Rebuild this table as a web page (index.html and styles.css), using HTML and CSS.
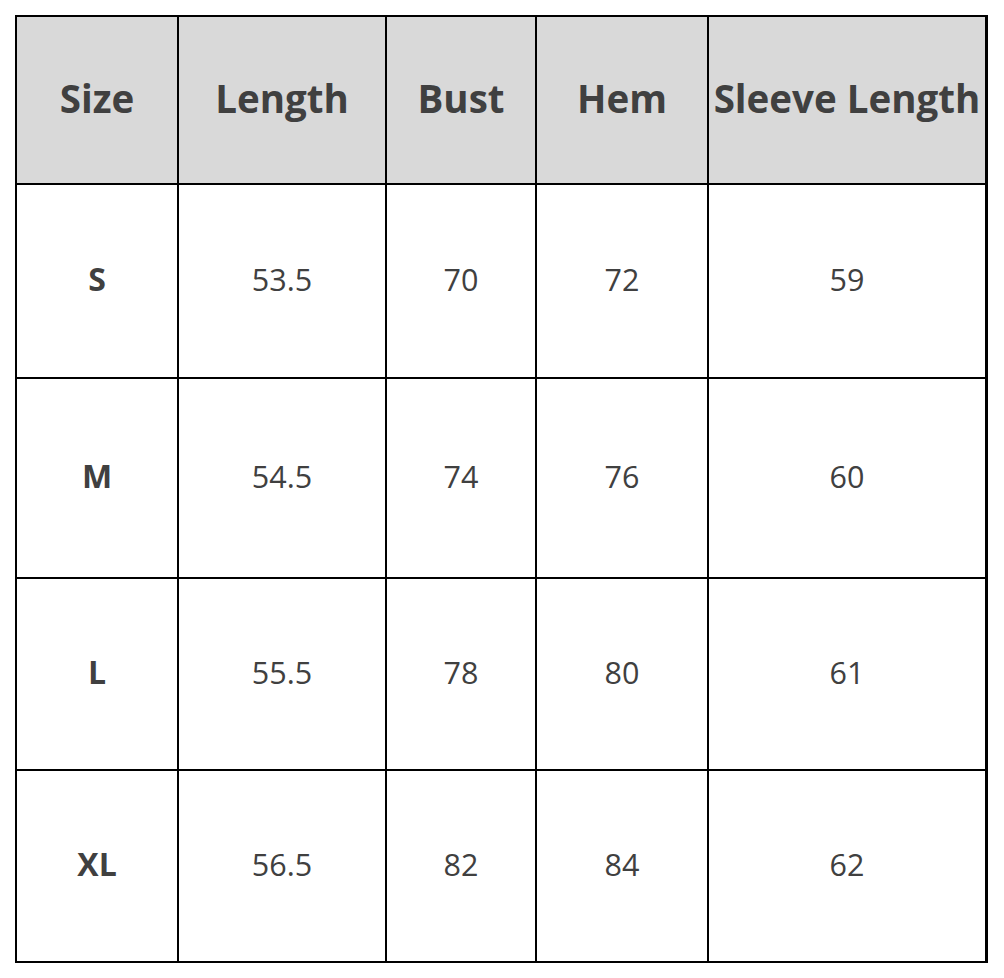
FILE: index.html
```html
<!DOCTYPE html>
<html lang="en">
<head>
<meta charset="utf-8">
<title>Size Chart</title>
<link rel="stylesheet" href="styles.css">
</head>
<body>
<div class="chart">
  <div class="cell head">Size</div>
  <div class="cell head">Length</div>
  <div class="cell head">Bust</div>
  <div class="cell head">Hem</div>
  <div class="cell head">Sleeve Length</div>

  <div class="cell label">S</div>
  <div class="cell">53.5</div>
  <div class="cell">70</div>
  <div class="cell">72</div>
  <div class="cell">59</div>

  <div class="cell label">M</div>
  <div class="cell">54.5</div>
  <div class="cell">74</div>
  <div class="cell">76</div>
  <div class="cell">60</div>

  <div class="cell label">L</div>
  <div class="cell">55.5</div>
  <div class="cell">78</div>
  <div class="cell">80</div>
  <div class="cell">61</div>

  <div class="cell label">XL</div>
  <div class="cell">56.5</div>
  <div class="cell">82</div>
  <div class="cell">84</div>
  <div class="cell">62</div>
</div>
</body>
</html>
```
FILE: styles.css
```css
html, body {
  margin: 0;
  padding: 0;
  background: #ffffff;
}

body {
  font-family: "Open Sans", "Noto Sans", sans-serif;
  color: #404040;
}

.chart {
  margin: 15px 0 0 15px;
  width: max-content;
  display: grid;
  grid-template-columns: 160px 206px 148px 170px 276px;
  grid-template-rows: 166px 192px 198px 190px 190px;
  gap: 2px;
  padding: 2px 3px 2px 2px;
  background: #000000;
}

.cell {
  background: #ffffff;
  display: flex;
  align-items: center;
  justify-content: center;
  font-size: 30.5px;
  line-height: 1.2;
  padding-bottom: 4px;
  white-space: nowrap;
}

.head {
  background: #d9d9d9;
  font-weight: 700;
  font-size: 38.5px;
  letter-spacing: 0;
}

.label {
  font-weight: 700;
  font-size: 32px;
}
```
